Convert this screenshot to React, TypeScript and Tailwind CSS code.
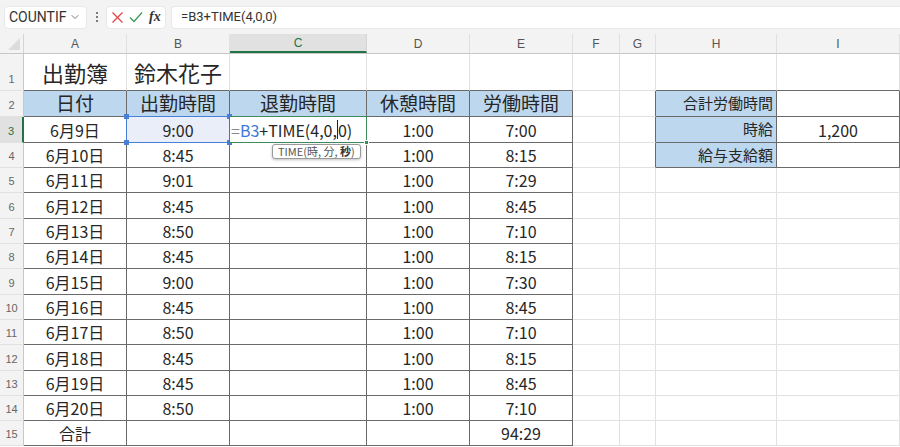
import { ChevronDown } from 'lucide-react';

const COLS = [
  { key: 'A', w: 'w-[103px]' },
  { key: 'B', w: 'w-[103px]' },
  { key: 'C', w: 'w-[137px]' },
  { key: 'D', w: 'w-[103px]' },
  { key: 'E', w: 'w-[103px]' },
  { key: 'F', w: 'w-[47px]' },
  { key: 'G', w: 'w-[36px]' },
  { key: 'H', w: 'w-[121px]' },
  { key: 'I', w: 'w-[123px]' },
];

const ROW_H = [
  'h-[37px]', 'h-[26px]', 'h-[26px]', 'h-[25px]', 'h-[25px]', 'h-[26px]', 'h-[25px]', 'h-[25px]',
  'h-[26px]', 'h-[25px]', 'h-[25px]', 'h-[26px]', 'h-[25px]', 'h-[25px]', 'h-[25px]',
];

const DATA: [string, string, string, string][] = [
  ['6月9日', '9:00', '1:00', '7:00'],
  ['6月10日', '8:45', '1:00', '8:15'],
  ['6月11日', '9:01', '1:00', '7:29'],
  ['6月12日', '8:45', '1:00', '8:45'],
  ['6月13日', '8:50', '1:00', '7:10'],
  ['6月14日', '8:45', '1:00', '8:15'],
  ['6月15日', '9:00', '1:00', '7:30'],
  ['6月16日', '8:45', '1:00', '8:45'],
  ['6月17日', '8:50', '1:00', '7:10'],
  ['6月18日', '8:45', '1:00', '8:15'],
  ['6月19日', '8:45', '1:00', '8:45'],
  ['6月20日', '8:50', '1:00', '7:10'],
];

// which cells sit inside a bordered table (row number 1-based, col index 0-based)
function inTable(r: number, c: number) {
  if (r >= 2 && r <= 15 && c >= 0 && c <= 4) return true;
  if (r >= 2 && r <= 4 && (c === 7 || c === 8)) return true;
  return false;
}

function cellText(r: number, c: number): string {
  if (r === 1) return c === 0 ? '出勤簿' : c === 1 ? '鈴木花子' : '';
  if (r === 2) {
    const h = ['日付', '出勤時間', '退勤時間', '休憩時間', '労働時間'];
    if (c <= 4) return h[c];
    if (c === 7) return '合計労働時間';
    return '';
  }
  if (r >= 3 && r <= 14) {
    const d = DATA[r - 3];
    if (c === 0) return d[0];
    if (c === 1) return d[1];
    if (c === 3) return d[2];
    if (c === 4) return d[3];
    if (r === 3 && c === 7) return '時給';
    if (r === 3 && c === 8) return '1,200';
    if (r === 4 && c === 7) return '給与支給額';
    return '';
  }
  if (r === 15) {
    if (c === 0) return '合計';
    if (c === 4) return '94:29';
  }
  return '';
}

function EditCell() {
  return (
    <div className="relative w-full h-full">
      <div className="absolute -left-px -top-px -right-px -bottom-px border border-[#3f8a5a] z-10" />
      <div className="absolute -right-[3px] -bottom-[3px] w-[5px] h-[5px] bg-[#3f8a5a] border border-white z-20" />
      <div className="absolute inset-0 flex items-center pl-[1px] text-[16px] text-[#262626] whitespace-nowrap z-10">
        <span className="text-[#8a8a8a]">=</span>
        <span className="text-[#3f78d6]">B3</span>
        <span>+TIME(4,0,</span>
        <span className="inline-block w-px h-[19px] bg-[#222]" />
        <span>0)</span>
      </div>
      <div className="absolute left-[42px] top-[27px] z-30 h-[15px] px-[5px] flex items-center rounded-[3px] border border-[#9a9a9a] bg-white shadow-[0_1px_3px_rgba(0,0,0,0.25)] text-[11px] leading-none text-[#555] whitespace-nowrap">
        TIME(時,&nbsp;分,&nbsp;<span className="font-bold text-[#333]">秒</span>)
      </div>
    </div>
  );
}

function SelectedCell({ text }: { text: string }) {
  return (
    <div className="relative w-full h-full bg-[#e9eef8] flex items-center justify-center text-[16px] text-[#262626]">
      <div className="absolute -left-px -top-px -right-px -bottom-px border-[1.5px] border-[#4a7fd8]" />
      <div className="absolute -left-[3px] -top-[3px] w-[5px] h-[5px] bg-[#4a7fd8]" />
      <div className="absolute -right-[3px] -top-[3px] w-[5px] h-[5px] bg-[#4a7fd8]" />
      <div className="absolute -left-[3px] -bottom-[3px] w-[5px] h-[5px] bg-[#4a7fd8]" />
      <div className="absolute -right-[3px] -bottom-[3px] w-[5px] h-[5px] bg-[#4a7fd8]" />
      <span className="relative">{text}</span>
    </div>
  );
}

function Cell({ r, c }: { r: number; c: number }) {
  const col = COLS[c];
  const t = inTable(r, c);
  const darkR = t || inTable(r, c + 1);
  const darkB = t || inTable(r + 1, c);
  const blue = (r === 2 && c <= 4) || (r >= 2 && r <= 4 && c === 7);
  const text = cellText(r, c);

  let align = 'justify-center';
  let size = 'text-[16px]';
  if (r === 1) {
    size = 'text-[22px]';
  } else if (r === 2 && c <= 4) {
    size = 'text-[19px]';
  } else if (c === 7) {
    align = 'justify-end pr-[3px]';
    size = 'text-[15px]';
  }

  return (
    <div
      className={`${col.w} h-full shrink-0 border-r border-b ${
        darkR ? 'border-r-[#6a6a6a]' : 'border-r-[#e1e1e1]'
      } ${darkB ? 'border-b-[#6a6a6a]' : 'border-b-[#e1e1e1]'} ${blue ? 'bg-[#bdd7ee]' : 'bg-white'} ${
        r === 3 && (c === 1 || c === 2) ? 'relative z-10' : ''
      }`}
    >
      {r === 3 && c === 1 ? (
        <SelectedCell text={text} />
      ) : r === 3 && c === 2 ? (
        <EditCell />
      ) : (
        <div className={`w-full h-full flex items-center ${align} ${size} text-[#262626] whitespace-nowrap`}>
          {text}
        </div>
      )}
    </div>
  );
}

export default function App() {
  return (
    <div className="w-[900px] h-[447px] overflow-hidden bg-white font-['Noto_Sans_CJK_JP','Noto_Sans',sans-serif] select-none">
      {/* formula bar */}
      <div className="h-[34px] bg-[#f3f3f3] flex items-center pl-[4px] gap-0">
        <div className="w-[83px] h-[23px] bg-white rounded-[4px] border border-[#e8e8e8] flex items-center justify-between pl-[4px] pr-[5px]">
          <span className="font-['Roboto',sans-serif] text-[14px] text-[#333]">COUNTIF</span>
          <ChevronDown size={12} strokeWidth={1.6} className="text-[#555]" />
        </div>
        <div className="w-[19px] flex flex-col items-center gap-[2px]">
          <span className="w-[2px] h-[2px] bg-[#555] rounded-full" />
          <span className="w-[2px] h-[2px] bg-[#555] rounded-full" />
          <span className="w-[2px] h-[2px] bg-[#555] rounded-full" />
        </div>
        <div className="w-[60px] h-[23px] bg-white rounded-[4px] border border-[#e8e8e8] flex items-center pl-[4px] gap-[5px]">
          <svg width="13" height="13" viewBox="0 0 13 13" fill="none" stroke="#e04848" strokeWidth="1.3">
            <path d="M1.5 1.5l10 10M11.5 1.5l-10 10" />
          </svg>
          <svg width="14" height="12" viewBox="0 0 14 12" fill="none" stroke="#3c9a5c" strokeWidth="1.3">
            <path d="M1 6.5l4 4L13 1.5" />
          </svg>
          <span className="font-['Liberation_Serif',serif] italic font-bold text-[14px] text-[#333] leading-none ml-[1px]">
            fx
          </span>
        </div>
        <div className="ml-[5px] flex-1 h-[23px] bg-white rounded-l-[4px] border border-r-0 border-[#e8e8e8] flex items-center pl-[9px] font-['Roboto',sans-serif] text-[13px] text-[#333]">
          =B3+TIME(4,0,0)
        </div>
      </div>

      {/* column headers */}
      <div className="h-[20px] flex bg-[#f3f3f3] border-b border-[#c8c8c8]">
        <div className="w-[24px] h-full shrink-0 border-r border-[#d4d4d4] relative">
          <div className="absolute right-[3px] bottom-[3px] w-0 h-0 border-l-[12px] border-l-transparent border-b-[12px] border-b-[#dcdcdc]" />
        </div>
        {COLS.map((col, i) =>
          i === 2 ? (
            <div
              key={col.key}
              className={`${col.w} h-full shrink-0 bg-[#e1e1e1] border-r border-[#d4d4d4] border-b-2 border-b-[#217346] flex items-center justify-center text-[12px] text-[#217346] font-['Liberation_Sans',sans-serif]`}
            >
              {col.key}
            </div>
          ) : (
            <div
              key={col.key}
              className={`${col.w} h-full shrink-0 border-r border-[#e0e0e0] flex items-center justify-center text-[12px] text-[#555] font-['Liberation_Sans',sans-serif]`}
            >
              {col.key}
            </div>
          ),
        )}
      </div>

      {/* rows */}
      {ROW_H.map((h, idx) => {
        const r = idx + 1;
        return (
          <div key={r} className={`${h} flex`}>
            <div
              className={`w-[24px] h-full shrink-0 flex items-end justify-center pb-[3px] text-[11px] font-['Liberation_Sans',sans-serif] border-b border-[#e1e1e1] ${
                r === 3
                  ? 'bg-[#e1e1e1] text-[#217346] border-r-2 border-r-[#217346]'
                  : 'bg-[#f3f3f3] text-[#666] border-r border-r-[#c8c8c8]'
              }`}
            >
              {r}
            </div>
            {COLS.map((col, c) => (
              <Cell key={col.key} r={r} c={c} />
            ))}
          </div>
        );
      })}
    </div>
  );
}
